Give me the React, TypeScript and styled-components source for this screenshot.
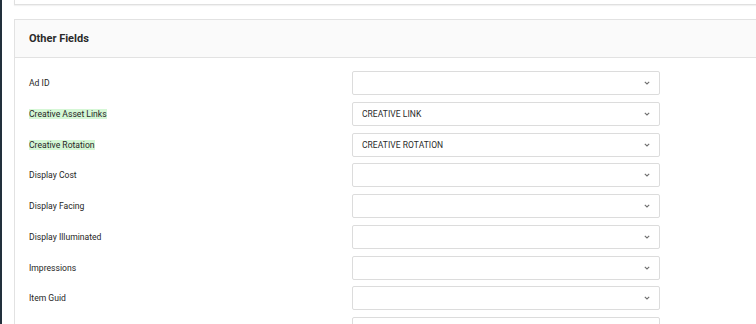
import styled, { createGlobalStyle } from "styled-components";

type Field = {
  label: string;
  value?: string;
  highlighted?: boolean;
};

// the last row is only partly in view, its label sits below the fold
const fields: Field[] = [
  { label: "Ad ID" },
  { label: "Creative Asset Links", value: "CREATIVE LINK", highlighted: true },
  { label: "Creative Rotation", value: "CREATIVE ROTATION", highlighted: true },
  { label: "Display Cost" },
  { label: "Display Facing" },
  { label: "Display Illuminated" },
  { label: "Impressions" },
  { label: "Item Guid" },
  { label: "" },
];

const Chevron = () => (
  <svg width="6" height="4" viewBox="0 0 6 4" fill="none">
    <path d="M0.8 0.8 L3 3 L5.2 0.8" stroke="#6f6f6f" strokeWidth="1.1" />
  </svg>
);

const App = () => {
  return (
    <>
      <GlobalStyle />
      <Page>
        <SideStrip />
        <Content>
          <TopCard />
          <Card>
            <CardHeader>
              <Title>Other Fields</Title>
            </CardHeader>
            <CardBody>
              {fields.map((field, i) => (
                <Row key={i}>
                  <LabelCell>
                    {field.label && (
                      <Label $highlighted={!!field.highlighted}>{field.label}</Label>
                    )}
                  </LabelCell>
                  <Select>
                    <SelectValue>{field.value ?? ""}</SelectValue>
                    <Chevron />
                  </Select>
                </Row>
              ))}
            </CardBody>
          </Card>
        </Content>
      </Page>
    </>
  );
};

export default App;

const GlobalStyle = createGlobalStyle`
  html, body {
    margin: 0;
    padding: 0;
    background: #ffffff;
    overflow: hidden;
  }
  body {
    font-family: Roboto, "Liberation Sans", Arial, sans-serif;
    color: #2b2b2b;
  }
`;

const Page = styled.div`
  display: flex;
  width: 756px;
  height: 324px;
  overflow: hidden;
`;

const SideStrip = styled.div`
  flex: 0 0 2px;
  background-color: #22303c;
`;

const Content = styled.div`
  display: flex;
  flex-direction: column;
  gap: 14px;
  padding-left: 12px;
  flex: 1;
  min-width: 0;
`;

const TopCard = styled.div`
  flex-shrink: 0;
  width: 800px;
  height: 4px;
  border: 1px solid #e0e0e0;
  border-top: none;
  box-shadow: 0 1px 1px rgba(0, 0, 0, 0.05);
`;

const Card = styled.div`
  flex-shrink: 0;
  width: 800px;
  border: 1px solid #e2e2e2;
  border-bottom: none;
  background-color: #ffffff;
`;

const CardHeader = styled.div`
  display: flex;
  align-items: center;
  height: 37px;
  padding-left: 14px;
  background-color: #fafafa;
  border-bottom: 1px solid #e2e2e2;
`;

const Title = styled.h3`
  margin: 0;
  font-size: 11px;
  font-weight: 700;
  color: #2a2a2a;
`;

const CardBody = styled.div`
  display: flex;
  flex-direction: column;
  gap: 6.75px;
  padding: 13px 0 0 14px;
`;

const Row = styled.div`
  flex-shrink: 0;
  display: grid;
  grid-template-columns: 323px 308px;
  align-items: center;
  height: 24px;
`;

const LabelCell = styled.div`
  display: flex;
  align-items: center;
`;

const Label = styled.span<{ $highlighted: boolean }>`
  font-size: 8.6px;
  line-height: 10px;
  color: #262626;
  background-color: ${({ $highlighted }) => ($highlighted ? "#d5f7d5" : "transparent")};
`;

const Select = styled.div`
  box-sizing: border-box;
  display: flex;
  align-items: center;
  justify-content: space-between;
  height: 24px;
  padding: 0 9px 0 9px;
  border: 1px solid #dcdcdc;
  border-radius: 2px;
  background-color: #ffffff;
`;

const SelectValue = styled.span`
  font-size: 8.5px;
  color: #2a2a2a;
  letter-spacing: 0.05px;
`;
